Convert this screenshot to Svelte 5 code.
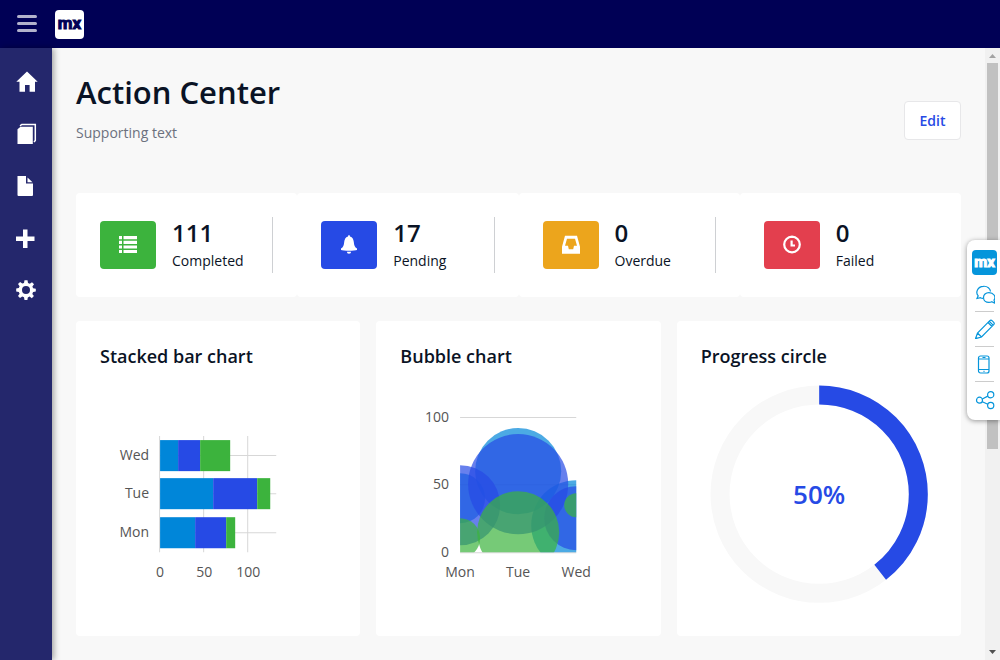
<script>
  const nav = [
    { id: 'home', label: 'Home' },
    { id: 'duplicate', label: 'Copies' },
    { id: 'file', label: 'Documents' },
    { id: 'plus', label: 'Add' },
    { id: 'cog', label: 'Settings' }
  ];

  const stats = [
    { id: 'list', value: 111, label: 'Completed', tone: 'success' },
    { id: 'bell', value: 17, label: 'Pending', tone: 'primary' },
    { id: 'inbox', value: 0, label: 'Overdue', tone: 'warning' },
    { id: 'clock', value: 0, label: 'Failed', tone: 'danger' }
  ];

  const tools = [
    { id: 'chat', label: 'Feedback' },
    { id: 'pencil', label: 'Edit in studio' },
    { id: 'phone', label: 'View on device' },
    { id: 'share', label: 'Share' }
  ];

  const colors = ['#0086d9', '#264ae5', '#3cb33d'];

  const bars = [
    { day: 'Wed', y: 72, parts: [18, 22, 30] },
    { day: 'Tue', y: 110, parts: [53, 44, 13] },
    { day: 'Mon', y: 149, parts: [35, 31, 9] }
  ].map((row) => {
    let x = 60;
    return {
      ...row,
      parts: row.parts.map((w) => {
        const part = { x, w };
        x += w;
        return part;
      })
    };
  });

  const bubbles = [
    { x: 60, y: 130, r: 25, c: 0 },
    { x: 118, y: 103, r: 43, c: 0 },
    { x: 176, y: 157, r: 45, c: 0 },
    { x: 60, y: 137, r: 40, c: 1 },
    { x: 118, y: 116, r: 50, c: 1 },
    { x: 176, y: 150, r: 32, c: 1 },
    { x: 60, y: 170, r: 20, c: 2 },
    { x: 118, y: 164, r: 41, c: 2 },
    { x: 176, y: 137, r: 12, c: 2 }
  ];
</script>

{#snippet icon(id)}
  <svg class="icon {id}" viewBox="0 0 20 20" aria-hidden="true">
    {#if id === 'home'}
      <path d="M10-.5 20.700 9.700H18V19.800H12.600V13H8V19.800H2.500V9.700H-.7Z" />
    {:else if id === 'duplicate'}
      <path d="M3.500 2.800H15.800V20H.5V5.200Z" />
      <path d="M3 1.800 4.800.5H18.300V16.500L17 18" fill="none" stroke="currentColor" stroke-width="1.500" />
    {:else if id === 'file'}
      <path d="M.5 0H9V7.500H16V19Q16 20 15 20H1.500Q.5 20 .5 19ZM10.500 1.500 15.500 6.300H10.500Z" />
    {:else if id === 'plus'}
      <path d="M6 1.500H10.500V8.500H17.500V13H10.500V20H6V13H-1V8.500H6Z" />
    {:else if id === 'cog'}
      <path transform="translate(-1 0)" fill-rule="evenodd" d="M8.500.3h3l.5 2.700 1.800.8L16 2.200 18 4.200 16.400 6.500l.7 1.800 2.700.4v2.900l-2.700.5-.8 1.800 1.600 2.200-2.100 2.100-2.200-1.600-1.800.8-.4 2.500h-2.900l-.5-2.600-1.800-.8L4 18 2 16l1.600-2.200-.8-1.800L.2 11.500v-3l2.600-.5.8-1.800L2 4 4.100 2l2.200 1.600L8 3ZM10 6a4 4 0 1 0 0 8 4 4 0 0 0 0-8Z" />
    {:else if id === 'list'}
      <path d="M1 1h3v3.200H1zM5.500 1h13.500v3.200H5.500zM1 5.700h3v3.200H1zM5.500 5.700h13.500v3.200H5.500zM1 10.400h3v3.200H1zM5.500 10.400h13.500v3.200H5.500zM1 15.100h3v3H1zM5.500 15.100h13.500v3H5.500z" />
    {:else if id === 'bell'}
      <path d="M9.300.3h1.400l.3 1.200c2.600.6 3.500 3 3.800 5.500.3 3.500.9 5.300 3.200 6.500v1.600c-2 .9-14 .9-16 0v-1.600c2.300-1.200 2.900-3 3.200-6.500C5.500 4.500 6.400 2.100 9 1.500ZM7.900 16.700h4.200a2.100 2.100 0 0 1-4.200 0Z" />
    {:else if id === 'inbox'}
      <path fill-rule="evenodd" d="M4 .8h12l3 11v7H1v-7ZM6 3.800 4 10.800h3l.8 3.500h4.400l.8-3.500h3l-2-7Z" />
    {:else if id === 'clock'}
      <path d="M10 1.700a7.800 7.800 0 1 0 0 15.600 7.800 7.800 0 0 0 0-15.600ZM9.600 5.500V10.500H13" fill="none" stroke="currentColor" stroke-width="2.200" />
    {/if}
  </svg>
{/snippet}

<div class="app">
  <header>
    <button class="burger" aria-label="Toggle menu"><i></i><i></i><i></i></button>
    <a class="logo" href="#home">mx</a>
  </header>

  <div class="body">
    <nav>
      {#each nav as item}
        <a href="#{item.id}" aria-label={item.label}>{@render icon(item.id)}</a>
      {/each}
    </nav>

    <main>
      <div class="heading">
        <div>
          <h1>Action Center</h1>
          <p>Supporting text</p>
        </div>
        <button class="edit">Edit</button>
      </div>

      <section class="stats">
        {#each stats as s}
          <article class="stat">
            <span class="badge {s.tone}">{@render icon(s.id)}</span>
            <div class="figures">
              <strong>{s.value}</strong>
              <span>{s.label}</span>
            </div>
          </article>
        {/each}
      </section>

      <section class="charts">
        <article class="card">
          <h2>Stacked bar chart</h2>
          <svg viewBox="0 0 236 244" role="img" aria-label="Stacked bar chart">
            <path class="grid" d="M59.500 68V184M103.500 68V184M147.500 68V184M60 87.500H176M60 125.500H176M60 164.500H176" />
            {#each bars as row}
              <text x="49" y={row.y + 20} text-anchor="end">{row.day}</text>
              {#each row.parts as p, i}
                <rect x={p.x} y={row.y} width={p.w} height="31" fill={colors[i]} />
              {/each}
            {/each}
            <text x="60" y="209" text-anchor="middle">0</text>
            <text x="104" y="209" text-anchor="middle">50</text>
            <text x="148" y="209" text-anchor="middle">100</text>
          </svg>
        </article>

        <article class="card">
          <h2>Bubble chart</h2>
          <svg viewBox="0 0 236 244" role="img" aria-label="Bubble chart">
            <defs><clipPath id="plot"><rect x="60" y="49" width="116" height="135" /></clipPath></defs>
            <path class="grid" d="M60 49.500H176M60 116.500H176M60 184.500H176" />
            <g clip-path="url(#plot)">
              {#each bubbles as b}
                <circle cx={b.x} cy={b.y} r={b.r} fill={colors[b.c]} opacity="0.700" />
              {/each}
            </g>
            <text x="49" y="54" text-anchor="end">100</text>
            <text x="49" y="121" text-anchor="end">50</text>
            <text x="49" y="189" text-anchor="end">0</text>
            <text x="60" y="209" text-anchor="middle">Mon</text>
            <text x="118" y="209" text-anchor="middle">Tue</text>
            <text x="176" y="209" text-anchor="middle">Wed</text>
          </svg>
        </article>

        <article class="card">
          <h2>Progress circle</h2>
          <svg viewBox="0 0 236 244" role="img" aria-label="Progress circle">
            <circle cx="118" cy="126" r="99" fill="none" stroke="#f8f8f8" stroke-width="19" />
            <circle cx="118" cy="126" r="99" fill="none" stroke="#264ae5" stroke-width="19"
              pathLength="360" stroke-dasharray="142 218" transform="rotate(-90 118 126)" />
            <text class="percent" x="118" y="136" text-anchor="middle">50%</text>
          </svg>
        </article>
      </section>
    </main>

    <div class="scroll" aria-hidden="true">
      <svg viewBox="0 0 15 15"><path d="M4 10 7.500 6 11 10Z" fill="#a3a3a3" /></svg>
      <div class="track"><i></i></div>
      <svg viewBox="0 0 15 15"><path d="M4 5H11L7.500 9Z" fill="#505050" /></svg>
    </div>
  </div>

  <aside>
    <a class="logo small" href="#mx">mx</a>
    {#each tools as t}
      <button aria-label={t.label}>
        <svg viewBox="-1 -1 20 20" aria-hidden="true">
          {#if t.id === 'chat'}
            <path d="M7 13.300Q5.500 13.300 4.500 12.700L1 13.500 2.200 10.800C-.8 7.500 1.500 1.500 7.300 1.300 11.500 1 14.300 3.500 14.500 6.500M12.900 7.600c-3.200 0-5.400 2.200-5.400 4.900s2.200 4.900 5.400 4.900q1.600 0 2.900-.7l3.200 1.600-1-3.100c2.400-3.700-.5-7.600-5.100-7.600Z" />
          {:else if t.id === 'pencil'}
            <path d="M-.5 18.700 1.500 13 13.800.7Q15-.3 16.300.9L17.700 2.300Q18.800 3.500 17.700 4.700L5.500 17ZM1.500 13 5.500 17M12 2.500 16 6.500M13.300 1.300 17.200 5.200" />
          {:else if t.id === 'phone'}
            <rect x="2.500" y="1" width="10.500" height="17" rx="2" /><path d="M2.500 4H13M2.500 14.500H13M6.500 2.500H9.500M7.500 16.300H8.500" />
          {:else}
            <circle cx="3.500" cy="9.200" r="3" /><circle cx="14.700" cy="3.700" r="3.100" /><circle cx="14.700" cy="14.500" r="3.100" /><path d="M6.300 8 11.800 5.100M6.300 10.700 11.800 13.200" />
          {/if}
        </svg>
      </button>
    {/each}
  </aside>
</div>

<style>
  :global(body) {
    margin: 0;
  }
  .app {
    display: flex;
    flex-direction: column;
    height: 100vh;
    overflow: hidden;
    position: relative;
    background: #f8f8f8;
    color: #0a1325;
    font: 14px/20px 'Open Sans', sans-serif;
  }
  button {
    font: inherit;
    border: 0;
    padding: 0;
    background: none;
    cursor: pointer;
  }
  header {
    flex: none;
    display: flex;
    align-items: center;
    gap: 18px;
    height: 48px;
    padding-left: 17px;
    box-sizing: border-box;
    background: #000055;
  }
  .burger {
    display: grid;
    gap: 4px;
    width: 20px;
    padding-bottom: 2px;
  }
  .burger i {
    height: 3px;
    border-radius: 2px;
    background: #b2b2cc;
  }
  .logo {
    display: flex;
    align-items: center;
    justify-content: center;
    box-sizing: border-box;
    width: 29px;
    height: 29px;
    padding-bottom: 2px;
    border-radius: 4px;
    background: #fff;
    color: #000055;
    font: 700 17px/24px Roboto, sans-serif;
    -webkit-text-stroke: 1px currentColor;
    text-decoration: none;
  }
  .body {
    flex: 1;
    display: flex;
    min-height: 0;
  }
  nav {
    flex: none;
    display: flex;
    flex-direction: column;
    gap: 32px;
    width: 35px;
    padding: 24px 0 0 17px;
    background: #24276c;
    box-shadow: 2px 0 6px rgba(0, 0, 0, 0.35);
    z-index: 1;
  }
  nav a {
    display: block;
    height: 20px;
    color: #fff;
  }
  .icon {
    display: block;
    width: 20px;
    height: 20px;
    fill: currentColor;
    overflow: visible;
  }
  main {
    flex: 1;
    min-width: 0;
    padding: 24px;
    overflow: hidden;
  }
  .heading {
    display: flex;
    align-items: center;
    justify-content: space-between;
    height: 97px;
    margin-bottom: 24px;
  }
  h1 {
    margin: 0 0 12px;
    font-size: 31px;
    line-height: 38px;
    font-weight: 600;
  }
  .heading p {
    margin: 0 0 26px;
    color: #6c717e;
  }
  .edit {
    min-width: 57px;
    padding: 9px 14px;
    border: 1px solid #e7e7e9;
    border-radius: 4px;
    background: #fff;
    color: #264ae5;
    font-weight: 600;
    line-height: 19px;
  }
  .stats {
    display: grid;
    grid-template-columns: repeat(4, 1fr);
    margin-bottom: 24px;
  }
  .stat {
    display: flex;
    align-items: center;
    gap: 16px;
    padding: 24px;
    border-radius: 4px;
    background: #fff;
  }
  .badge {
    display: grid;
    place-items: center;
    width: 56px;
    height: 48px;
    border-radius: 4px;
    color: #fff;
  }
  .success { background: #3cb33d; }
  .primary { background: #264ae5; }
  .warning { background: #eca51c; }
  .danger { background: #e33f4e; }
  .figures {
    flex: 1;
    display: flex;
    flex-direction: column;
    gap: 2px;
    height: 56px;
    border-right: 1px solid #ced0d3;
  }
  .stat:last-child .figures {
    border: 0;
  }
  .figures strong {
    font-size: 24px;
    line-height: 32px;
    font-weight: 600;
  }
  .charts {
    display: grid;
    grid-template-columns: repeat(3, 1fr);
    gap: 16px;
  }
  .card {
    padding: 24px;
    border-radius: 4px;
    background: #fff;
  }
  h2 {
    margin: 0 0 1px;
    font-size: 18px;
    line-height: 22px;
    font-weight: 600;
  }
  .card svg {
    display: block;
    width: 100%;
  }
  .card text {
    fill: #555;
    font-size: 14px;
  }
  .card .percent {
    fill: #264ae5;
    font-size: 26px;
    font-weight: 600;
  }
  .grid {
    stroke: #d7d7d7;
    fill: none;
  }
  .scroll {
    flex: none;
    display: flex;
    flex-direction: column;
    width: 15px;
    background: #f1f1f1;
  }
  .scroll svg {
    height: 15px;
  }
  .track {
    flex: 1;
    padding: 0 2px;
  }
  .track i {
    display: block;
    height: 66.3%;
    background: #c1c1c1;
  }
  aside {
    position: absolute;
    right: 0;
    top: 240px;
    z-index: 2;
    display: flex;
    flex-direction: column;
    align-items: center;
    width: 33px;
    padding: 10px 0 3px;
    border-radius: 8px 0 0 8px;
    background: #fff;
    box-shadow: 0 1px 5px rgba(0, 0, 0, 0.4);
  }
  .small {
    width: 25px;
    height: 25px;
    margin: 0 0 2px 2px;
    background: #0595db;
    color: #fff;
    font-size: 15px;
  }
  aside button {
    display: grid;
    place-items: center;
    width: 19px;
    height: 35px;
    margin-left: 2px;
    border-bottom: 1px solid #ccc;
    box-sizing: border-box;
  }
  aside button:last-child {
    border: 0;
  }
  aside button svg {
    width: 20px;
    height: 20px;
    fill: none;
    stroke: #0595db;
    stroke-width: 1.2;
  }
</style>
